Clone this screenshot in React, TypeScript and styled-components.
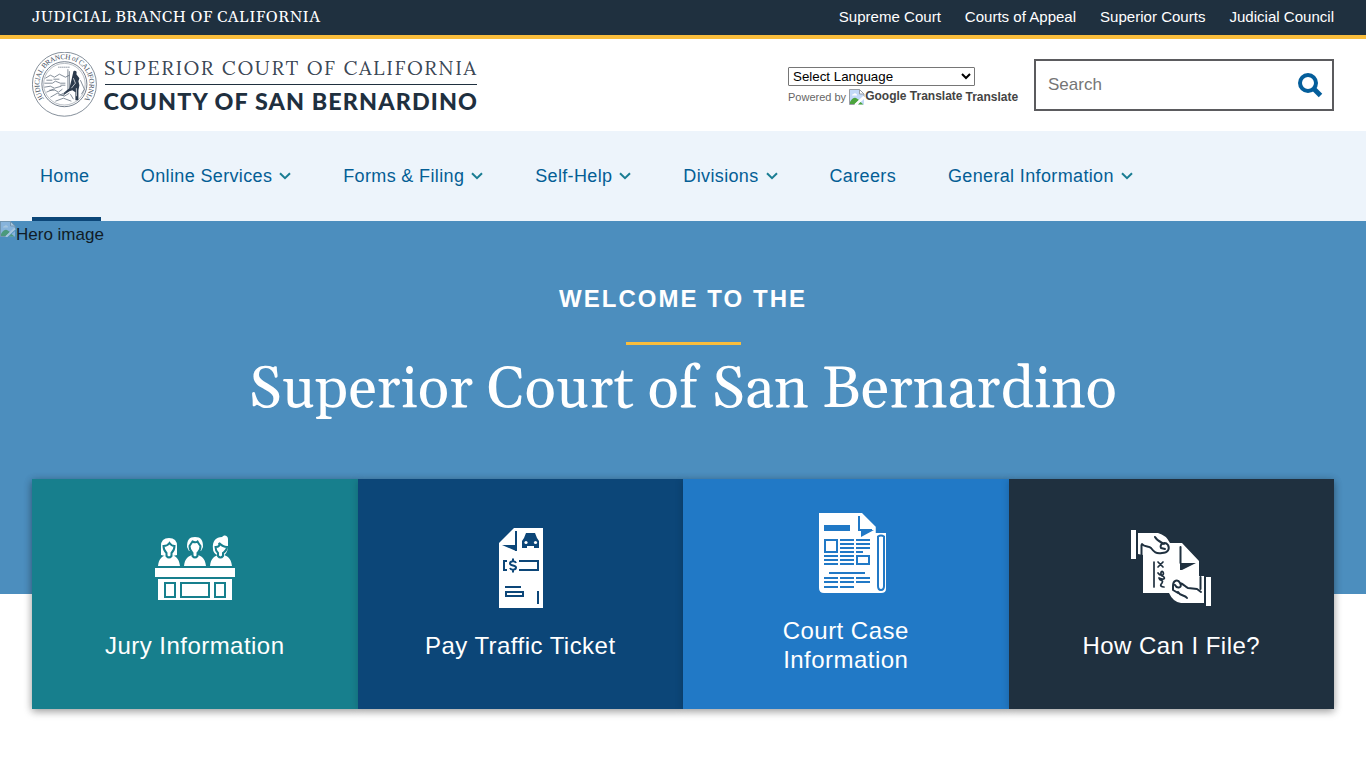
import React from "react";
import styled, { createGlobalStyle } from "styled-components";

const Global = createGlobalStyle`
  *{box-sizing:border-box}
  html{overflow:hidden}
  body{margin:0;background:#fff;color:#1f3040;font-family:"Liberation Sans",Arial,sans-serif;height:768px;overflow:hidden}
`;
const serif = `Georgia, Gelasio, "Liberation Serif", serif`;

const TopBar = styled.div`
  height:39px;padding:0 32px;background:#1f303f;border-bottom:4px solid #f9bd3c;
  display:flex;align-items:center;justify-content:space-between;color:#fff;
`;
const Branch = styled.div`font:16px/20px ${serif};white-space:nowrap;letter-spacing:.45px;margin-top:-2px;`;
const TopLinks = styled.nav`display:flex;gap:24px;margin-top:-2px;`;
const TopLink = styled.span`font-size:15.05px;line-height:20px;white-space:nowrap;`;

const Header = styled.header`
  height:92px;padding:0 32px;display:flex;align-items:center;justify-content:space-between;
`;
const Brand = styled.div`display:flex;align-items:center;gap:7px;`;
const Tools = styled.div`display:flex;align-items:flex-start;gap:16px;`;
const Translate = styled.div`width:230px;padding-top:8px;`;
const Select = styled.div`
  width:187px;height:19px;border:1px solid #767676;border-radius:1px;color:#000;font-size:13.33px;line-height:17px;
  padding:0 3px 0 4px;display:flex;justify-content:space-between;align-items:center;
`;
const Powered = styled.div`display:flex;align-items:center;font-size:11px;color:#666;line-height:16px;margin-top:3px;white-space:nowrap;`;
const Strong = styled.b<{ $up?: boolean }>`font-size:12px;color:#444;margin-top:${p => (p.$up ? "-3px" : "0")};margin-right:3px;`;
const Search = styled.div`
  width:300px;height:52px;border:2px solid #5b5b5e;display:flex;align-items:center;justify-content:space-between;
  padding:0 9px 0 12px;color:#757575;font-size:17px;
`;

const Nav = styled.nav`height:90px;background:#edf4fb;padding:0 32px;display:flex;gap:35.9px;`;
const NavItem = styled.div<{ $active?: boolean }>`
  height:90px;padding:4px 8px 0;border-bottom:4px solid ${p => (p.$active ? "#0c4678" : "transparent")};
  padding-right:${p => (p.$active ? "12px" : "8px")};margin-right:${p => (p.$active ? "-4.5px" : "0")};
  color:#045e95;font-size:18px;letter-spacing:.36px;line-height:84px;display:flex;align-items:center;gap:7px;white-space:nowrap;
`;

const Hero = styled.section`
  height:373px;background:#4c8ebe;display:grid;grid-template-rows:26px 1fr;
`;
const HeroAlt = styled.div`display:flex;font-size:17px;line-height:27px;color:#101c27;`;
const Faded = styled.span`display:flex;opacity:.5;`;
const HeroBody = styled.div`display:flex;flex-direction:column;align-items:center;color:#fff;padding-top:37px;`;
const Welcome = styled.div`font-size:24px;line-height:30px;font-weight:700;letter-spacing:2.04px;`;
const Rule = styled.div`width:115px;height:3px;background:#f9bd3c;margin-top:28px;`;
const Title = styled.h1`margin:7px 0 0;font:400 58.3px/76px ${serif};white-space:nowrap;`;

const Cards = styled.section`
  display:grid;grid-template-columns:repeat(4,1fr);height:230px;margin:-115px 32px 0;position:relative;
  box-shadow:0 3px 8px rgba(0,0,0,.25);
`;
const Card = styled.a<{ $bg: string }>`
  background:${p => p.$bg};color:#fff;display:flex;flex-direction:column;align-items:center;justify-content:center;
  gap:23px;padding-bottom:1px;box-shadow:0 1px 8px rgba(0,0,0,.2);
`;
const CardLabel = styled.span`font-size:24px;line-height:29px;letter-spacing:.46px;text-align:center;width:200px;white-space:pre-line;`;

const Chevron = () => (
  <svg width="12" height="8" viewBox="0 0 12 8"><path d="M1 1.2l5 5 5-5" fill="none" stroke="#1a7d93" strokeWidth="2" /></svg>
);
const BrokenSvg = styled.svg`flex:none;`;
const Broken = () => (
  <BrokenSvg width="16" height="16" viewBox="0 0 16 16">
    <path d="M.5 15.500V.5h10l4.500 4.500v3L7 15.500z" fill="#c3d9f8" stroke="#9a9fa5" />
    <path d="M10.500.5V5h4.500z" fill="#fff" stroke="#9a9fa5" />
    <path d="M3 6.500a1.500 1.500 0 011.500-1.500 2 2 0 013.500 1.500z" fill="#fff" />
    <path d="M1 15v-2q3-5 6-4l3 2-4 4z" fill="#4ba43c" />
    <path d="M6 16l9-8.500" stroke="#fff" strokeWidth="2" />
    <path d="M9 15.500l6-5.500v5.500z" fill="#c3d9f8" /><path d="M9 15.500l2.500-2.500 3 2.500z" fill="#4ba43c" />
  </BrokenSvg>
);

const Seal = () => (
  <svg width="65" height="66" viewBox=".6 .8 65 66" fill="none" stroke="#526070">
    <defs><path id="arc" d="M13.300 48.300A25 25 0 1 1 52.700 48.300" /></defs>
    <circle cx="33" cy="33" r="32" strokeWidth=".7" />
    <circle cx="33" cy="33" r="22.500" strokeWidth=".8" /><circle cx="33" cy="33" r="20.800" strokeWidth=".4" />
    <text fill="#3c4a59" stroke="none" fontFamily="Liberation Serif, serif" fontSize="7.200">
      <textPath href="#arc" textLength="110" startOffset="1">JUDICIAL BRANCH of CALIFORNIA</textPath>
    </text>
    <path d="M27 16h12" strokeDasharray="1 1" />
    <path d="M14 27l5-3 4 2 5-3 6 3 4-2M13 32h8l3-2 5 2h5M13 36l6-1 4 2 7-2M15 41l7-3 5 3 4-3M19 46l7-4 7 3 5-3M24 50l8-3 8 3M15 29h6M22 28h6M29 34h5M18 39h5M27 44h6" strokeWidth=".7" />
    <path d="M36.500 18v22M38 20v18" strokeWidth=".7" />
    <path d="M42 20c2-1 4 0 3 3l3 4-1 3 1 4-1 5v10h-3v-8l-3-2-3 1-6 4 1-3 5-4 2-8z" fill="#2b3a4c" stroke="none" />
    <path d="M42 27l2 5-4 5M45 37v8" stroke="#fff" strokeWidth=".7" />
    <path d="M49 29l4 9-3 5M30 43l5-2M39 43l3 5" strokeWidth=".7" />
  </svg>
);
const Wordmark = () => (
  <svg width="374" height="66" viewBox="0 0 374 66" fill="#1f303f">
    <text x="0" y="23.300" fontFamily="Lora, Gelasio, Georgia, serif" fontSize="20" textLength="372" fillOpacity=".9">SUPERIOR COURT OF CALIFORNIA</text>
    <path d="M1 32.500h372" stroke="#1f303f" />
    <text x="-.5" y="57.500" fontFamily="Lato" fontWeight="900" fontSize="23.300" textLength="373.500">COUNTY OF SAN BERNARDINO</text>
  </svg>
);
const SearchIcon = () => (
  <svg width="25" height="25" viewBox="0 0 25 25" fill="none" stroke="#045e9b">
    <circle cx="10" cy="10" r="8" strokeWidth="4" /><path d="M15.500 15.500l7 7" strokeWidth="5" />
  </svg>
);

const Jury = () => (
  <svg width="80" height="80" viewBox="0 0 80 80" fill="#fff">
    <path d="M0 40h80v9H0zM3 51h74v21H3z" />
    <path d="M10 55h10v14H10zM26 55h28v14H26zM60 55h10v14H60z" fill="none" stroke="#177f8d" strokeWidth="2" />
    <path d="M3 38c1-7 3-9 8-11h6c5 2 7 4 8 11zM29 38c1-7 3-9 8-11h6c5 2 7 4 8 11zM55 38c1-7 3-9 8-11h6c5 2 7 4 8 11z" />
    <path d="M6 27V18q0-8 8-8t8 8v9l-4 1h-8z" />
    <path d="M32 19c0-7 2-10 8-10s8 3 8 10l-2 4H34z" />
    <path d="M58 21c-1-8 3-12 9-12 2-3 6-1.500 6 2v7c0 6-3 10-7 10s-8-3-8-7z" />
    <path d="M8.500 18q4 0 6-3 2 3 5 3c0 4-2 6-3 7v3q-2.500 3-5 0v-3c-2-2-3-3-3-7zM34.500 18q2-3 3-4.500 3 1.500 5 0 1 2 3 4.500c0 5-2 6-3 7v3q-2.500 3-5 0v-3c-2-2-3-3-3-7zM60.500 19q5 0 3.500-4 4 4 8 4c0 4-3 5-4 6v3q-2.500 3-5 0v-3c-2-2-2.500-3-2.500-6z" stroke="#177f8d" strokeWidth="2" />
  </svg>
);
const Ticket = () => (
  <svg width="46" height="80" viewBox="-2 0 46 80" fill="none" stroke="#0c4678" strokeWidth="2">
    <path d="M15 0h29v80H0V15z" fill="#fff" stroke="none" />
    <path d="M17 23L3 17h13z" fill="#0c4678" stroke="none" /><path d="M17 3v20" />
    <path d="M23 20v-7l2-3 2-5h9l2 5 2 3v7h-5v-2h-7v2z" fill="#0c4678" stroke="none" />
    <circle cx="27" cy="14.500" r="1.600" fill="#fff" stroke="none" /><circle cx="36.500" cy="14.500" r="1.600" fill="#fff" stroke="none" />
    <path d="M8 33H5v9h3M20 33h19v9H20M6 59h16M7 64h17v4H7zM39 63v13" />
    <path d="M17 35c-1-3-6-2-6 .5s6 1.500 6 4-5 3-6 .5M14 30.500v3M14 41.500v3" />
  </svg>
);
const News = () => (
  <svg width="80" height="80" viewBox="-13 0 80 80" fill="none" stroke="#2179c6" strokeWidth="2">
    <path d="M0 0h43l14 14v6h10v56q0 4-5 4H5q-5 0-5-5z" fill="#fff" stroke="none" />
    <path d="M5 12h26v6H5z" fill="#2179c6" stroke="none" />
    <path d="M40 3v14h13" /><path d="M42 17h13l-13 7z" fill="#2179c6" stroke="none" />
    <path d="M6 27h12v12H6zM21 27h14M21 31h14M21 35h14M21 39h14M37 27h14M37 31h14M37 35h14M37 39h7M5 43h14M5 47h14M5 51h14M21 43h14M21 47h14M21 51h14M38 43h12v8H38zM10 60h36M5 65h14M5 69h14M5 74h14M21 65h14M21 69h14M21 74h14M37 65h14M37 69h14" />
    <path d="M57.500 14v6" strokeWidth="1.500" />
    <path d="M59 23.500V73q0 4 3 4t3-4V23.500q-3-2-6 0z" strokeWidth="2" />
  </svg>
);
const File = () => (
  <svg width="80" height="80" viewBox="0 0 80 80" fill="none" stroke="#1f303f" strokeWidth="2" strokeLinejoin="round" strokeLinecap="round">
    <path d="M0 2h5v29H0zM75 49h5v29h-5z" fill="#fff" stroke="none" />
    <path d="M7 5h20q8 2 12 10h12l17 18v15h5v27H50q-8-1-12-10H12V27l-5-1z" fill="#fff" stroke="none" />
    <path d="M49 35h16l-14 7h-2z" fill="#1f303f" stroke="none" /><path d="M49.500 19v16" />
    <path d="M11 16c2 3 7 2 9 4 3 4 5 6 11 5 6 0 8-4 6-8-3-4-9-1-7 3l4 1M24 9c2 4 6 5 9 7M10.500 17v11M42 58c0-6 5-7 7-3 3 5-3 6-5 2M49 55c4 1 5 4 8 5l9 1 4 3M47 64c2 4 7 3 9 6M42 58v4l5 3M69.500 49v12" />
    <path d="M23 34v25M27 34l5 5M27 39l5-5M27 45c2 3 7 3 5-1-2-2-3 2-1 4 4 1 3 5-3 2 1 4 5 1 3 5-3 3 0 4 2 4" strokeWidth="1.700" />
  </svg>
);

const links = ["Supreme Court", "Courts of Appeal", "Superior Courts", "Judicial Council"];
const nav = ["Home", "Online Services", "Forms & Filing", "Self-Help", "Divisions", "Careers", "General Information"];
const cards = [
  { bg: "#177f8d", label: "Jury Information", icon: <Jury /> },
  { bg: "#0c4678", label: "Pay Traffic Ticket", icon: <Ticket /> },
  { bg: "#2179c6", label: "Court Case\nInformation", icon: <News /> },
  { bg: "#1f303f", label: "How Can I File?", icon: <File /> },
];

export default function App() {
  return (
    <>
      <Global />
      <TopBar>
        <Branch>JUDICIAL BRANCH OF CALIFORNIA</Branch>
        <TopLinks>{links.map(l => <TopLink key={l}>{l}</TopLink>)}</TopLinks>
      </TopBar>
      <Header>
        <Brand><Seal /><Wordmark /></Brand>
        <Tools>
          <Translate>
            <Select>Select Language<svg width="10" height="7" viewBox="0 0 10 7"><path d="M1 1l4 4 4-4" fill="none" stroke="#000" strokeWidth="2" /></svg></Select>
            <Powered>Powered by&nbsp;<Broken /><Strong $up>Google Translate</Strong><Strong>Translate</Strong></Powered>
          </Translate>
          <Search>Search<SearchIcon /></Search>
        </Tools>
      </Header>
      <Nav>
        {nav.map((n, i) => (
          <NavItem key={n} $active={i === 0}>{n}{n !== "Home" && n !== "Careers" && <Chevron />}</NavItem>
        ))}
      </Nav>
      <Hero>
        <HeroAlt><Faded><Broken /></Faded>Hero image</HeroAlt>
        <HeroBody><Welcome>WELCOME TO THE</Welcome><Rule /><Title>Superior Court of San Bernardino</Title></HeroBody>
      </Hero>
      <Cards>
        {cards.map(c => <Card key={c.label} $bg={c.bg}>{c.icon}<CardLabel>{c.label}</CardLabel></Card>)}
      </Cards>
    </>
  );
}
